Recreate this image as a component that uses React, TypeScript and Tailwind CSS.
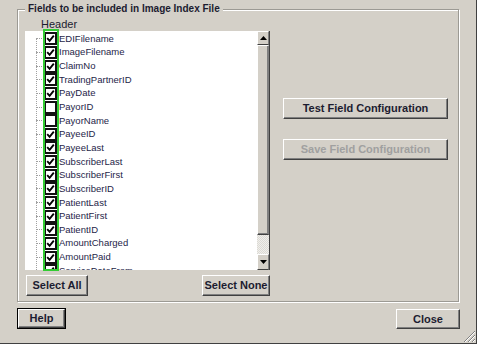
import React from "react";

const items: [string, boolean][] = [
  ["EDIFilename", true],
  ["ImageFilename", true],
  ["ClaimNo", true],
  ["TradingPartnerID", true],
  ["PayDate", true],
  ["PayorID", false],
  ["PayorName", false],
  ["PayeeID", true],
  ["PayeeLast", true],
  ["SubscriberLast", true],
  ["SubscriberFirst", true],
  ["SubscriberID", true],
  ["PatientLast", true],
  ["PatientFirst", true],
  ["PatientID", true],
  ["AmountCharged", true],
  ["AmountPaid", true],
  ["ServiceDateFrom", true],
];

const font = { fontFamily: '"Liberation Sans", Arial, sans-serif' };

function Btn({
  children,
  className,
  disabled,
  isDefault,
}: {
  children: React.ReactNode;
  className: string;
  disabled?: boolean;
  isDefault?: boolean;
}) {
  const inner = (
    <div
      className={
        "flex items-center justify-center w-full h-full border border-t-white border-l-white border-b-[#404040] border-r-[#404040] shadow-[inset_-1px_-1px_0_#808080] text-[11px] font-bold whitespace-nowrap " +
        (disabled ? "text-[#a0a0a0]" : "text-[#1c1c30]")
      }
    >
      {children}
    </div>
  );
  return (
    <div className={"bg-[#d4d0c8] " + (isDefault ? "border border-black " : "") + className}>
      {inner}
    </div>
  );
}

function Check({ on }: { on: boolean }) {
  return (
    <div className="w-[13px] h-[13px] border-2 border-[#111] bg-white flex items-center justify-center shrink-0">
      {on && (
        <svg width="9" height="9" viewBox="0 0 9 9">
          <path d="M1.2 4.2 L3.6 6.8 L7.8 1.6" fill="none" stroke="#000" strokeWidth="1.9" />
        </svg>
      )}
    </div>
  );
}

export default function App() {
  return (
    <div
      className="relative w-[477px] h-[344px] bg-[#d4d0c8] border-r border-b border-r-[#404040] border-b-[#404040] overflow-hidden"
      style={font}
    >
      {/* group box */}
      <div className="relative ml-[17px] mt-[9px] w-[442px] h-[293px] border border-[#9c9a94] shadow-[inset_1px_1px_0_#ffffff,1px_1px_0_#ffffff]">
        <div className="absolute left-[7px] top-[-7px] px-[3px] bg-[#d4d0c8] text-[10px] leading-[12px] font-bold text-[#1c1c30]">
          Fields to be included in Image Index File
        </div>
        <div className="flex pl-[7px] pt-[8px]">
          {/* left column */}
          <div className="w-[245px] flex flex-col">
            <div className="pl-[16px] h-[13px] text-[11px] leading-[13px] text-[#1c1c30]">Header</div>
            <div className="relative flex h-[239px] w-[245px]">
              <div className="relative flex-1 bg-white overflow-hidden pt-[1px]">
                {/* vertical tree line */}
                <div className="absolute left-[11px] top-[7px] bottom-0 border-l border-dotted border-[#a0a0a0]" />
                {items.map(([name, on]) => (
                  <div key={name} className="relative flex items-center h-[13.65px]">
                    <div className="w-[8px] ml-[11px] border-t border-dotted border-[#a0a0a0]" />
                    <Check on={on} />
                    <span className="ml-[2px] text-[9.5px] leading-[12px] text-[#1e1e48] whitespace-nowrap">
                      {name}
                    </span>
                  </div>
                ))}
              </div>
              {/* scrollbar */}
              <div className="w-[13px] flex flex-col bg-[#d4d0c8] border-r border-[#404040]">
                <div className="h-[14px] flex items-center justify-center border border-t-white border-l-white border-b-[#404040] border-r-[#808080]">
                  <svg width="7" height="4" viewBox="0 0 7 4">
                    <path d="M0 4 L3.5 0 L7 4 Z" fill="#000" />
                  </svg>
                </div>
                <div className="h-[190px] border border-t-white border-l-white border-b-[#404040] border-r-[#808080] shadow-[inset_-1px_-1px_0_#808080]" />
                <div className="flex-1 bg-[repeating-conic-gradient(#f0efec_0%_25%,#dcdad4_0%_50%)] bg-[length:2px_2px]" />
                <div className="h-[16px] flex items-center justify-center border border-t-white border-l-white border-b-[#404040] border-r-[#808080]">
                  <svg width="7" height="4" viewBox="0 0 7 4">
                    <path d="M0 0 L7 0 L3.5 4 Z" fill="#000" />
                  </svg>
                </div>
              </div>
              {/* green highlight */}
              <div className="absolute left-[18px] top-[-2px] w-[16px] h-[242px] border-2 border-[#33cc33]" />
            </div>
            <div className="flex justify-between mt-[5px] pl-[1px]">
              <Btn className="w-[62px] h-[21px]">Select All</Btn>
              <Btn className="w-[68px] h-[21px]">Select None</Btn>
            </div>
          </div>
          {/* right column */}
          <div className="ml-[13px] pt-[80px] flex flex-col gap-[20px]">
            <Btn className="w-[165px] h-[21px]">Test Field Configuration</Btn>
            <Btn className="w-[165px] h-[21px]" disabled>
              Save Field Configuration
            </Btn>
          </div>
        </div>
      </div>
      {/* bottom row */}
      <div className="flex justify-between ml-[17px] mr-[16px] mt-[6px]">
        <Btn className="w-[49px] h-[21px]" isDefault>
          Help
        </Btn>
        <Btn className="w-[64px] h-[20px] mt-[1px]">Close</Btn>
      </div>
      {/* resize grip */}
      <svg className="absolute right-0 bottom-0" width="14" height="14" viewBox="0 0 14 14">
        <path d="M13 2 L2 13 M13 6 L6 13 M13 10 L10 13" stroke="#808080" strokeWidth="1" />
        <path d="M13 3 L3 13 M13 7 L7 13 M13 11 L11 13" stroke="#ffffff" strokeWidth="1" />
      </svg>
    </div>
  );
}
